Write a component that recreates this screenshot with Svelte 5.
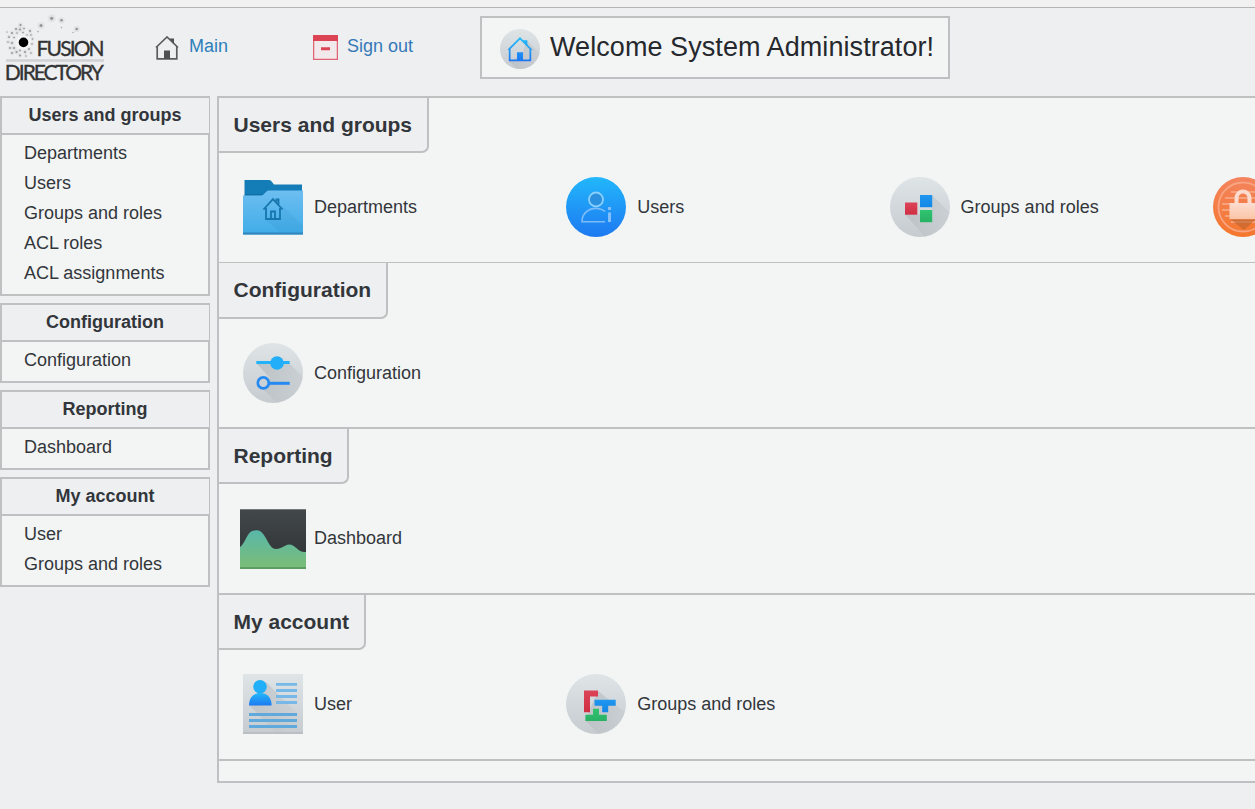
<script>
  const groups = [
    { title: 'Users and groups', height: 165, line: 1, tab: 55,
      menu: ['Departments', 'Users', 'Groups and roles', 'ACL roles', 'ACL assignments'],
      items: [['Departments', 'folder'], ['Users', 'users'], ['Groups and roles', 'groups'], ['', 'lock']] },
    { title: 'Configuration', height: 166, line: 2, tab: 56, menu: ['Configuration'], items: [['Configuration', 'config']] },
    { title: 'Reporting', height: 166, line: 2, tab: 55, menu: ['Dashboard'], items: [['Dashboard', 'chart']] },
    { title: 'My account', height: 166, line: 2, tab: 55, menu: ['User', 'Groups and roles'], items: [['User', 'card'], ['Groups and roles', 'tetris']] }
  ];
  const dots = [[51.7,4.3,1.6],[61.5,6.3,1.3],[41,11.5,1.5],[76.7,15,1.3],[61.5,13.5,.5],[38,17.5,.6],[73,18.5,.5],
    [20.5,11,1.1],[16,15,1],[20,15.5,1],[24,14.5,.8],[12,19,1],[17,19,.8],[23,18.5,.8],[30,17,1],[9,23,.9],[14,23.5,.8],[31,21,.8],
    [8,28,.8],[12,29,1],[10,34,.9],[14,34,1],[12,39,.9],[16.5,38,1],[20,36.5,.8],[20,41.5,.9],[25,38,1],[29,35,.9],[32,30,.8],[32.5,25,.8],[26,42,.7],[31,39,.8],[7,18,.6],[27,21,.7]];
</script>

<svg class="defs" aria-hidden="true">
  <defs>
    <linearGradient id="silver" x2="0" y2="1"><stop stop-color="#dfe4e7" /><stop offset="1" stop-color="#c5cbcf" /></linearGradient>
    <linearGradient id="blue" x2="0" y2="1"><stop stop-color="#22b7fb" /><stop offset="1" stop-color="#1d79f1" /></linearGradient>
    <linearGradient id="homeBlue" gradientUnits="userSpaceOnUse" x1="0" y1="16" x2="0" y2="48"><stop stop-color="#21b9fb" /><stop offset="1" stop-color="#1c77f4" /></linearGradient>
    <linearGradient id="front" x2="0" y2="1"><stop stop-color="#6dbef0" /><stop offset="1" stop-color="#40ace8" /></linearGradient>
    <linearGradient id="orange" x2="0" y2="1"><stop stop-color="#f4845f" /><stop offset="1" stop-color="#f4772c" /></linearGradient>
    <linearGradient id="peach" x2="0" y2="1"><stop stop-color="#fcddd0" /><stop offset="1" stop-color="#fbc4a6" /></linearGradient>
    <linearGradient id="dark" x2="0" y2="1"><stop stop-color="#43484b" /><stop offset="1" stop-color="#2c3033" /></linearGradient>
    <linearGradient id="hill" x2="0" y2="1"><stop stop-color="#58b7a9" /><stop offset="1" stop-color="#7dbd75" /></linearGradient>
    <linearGradient id="red" x2="0" y2="1"><stop stop-color="#dc4458" /><stop offset="1" stop-color="#d02e42" /></linearGradient>
    <linearGradient id="sky" x2="0" y2="1"><stop stop-color="#2196ef" /><stop offset="1" stop-color="#1287e5" /></linearGradient>
    <linearGradient id="green" x2="0" y2="1"><stop stop-color="#30c370" /><stop offset="1" stop-color="#29b163" /></linearGradient>
    <linearGradient id="shade" x2="1" y2="1"><stop stop-color="#737b80" stop-opacity=".26" /><stop offset=".85" stop-color="#737b80" stop-opacity="0" /></linearGradient>
    <clipPath id="disc"><circle cx="30" cy="30" r="30" /></clipPath>
  </defs>
</svg>

{#snippet icon(kind)}
  {#if kind === 'folder'}
    <svg class="icon" viewBox="0 0 60 60">
      <path d="M1.5 3h24.5q2 0 3 2l2 2.5h28V30h-57.5z" fill="#147db7" />
      <path d="M1.5 17h20v1.3h-20z" fill="#0d618f" opacity=".5" />
      <path d="M0 18.5h18q2 0 3.5-2l2-2q1-1 3-1H60V57.5H0z" fill="url(#front)" />
      <path d="M39 28l21 21v7H38L23 43h15z" fill="#2887bd" opacity=".12" />
      <path d="M0 55.6h60v1.9H0z" fill="#3187bd" />
      <path d="M20.5 32.5 30 22.2 39.5 32.5M23 31v11h14V31M33.5 24.5v-2h2v5M28 41.5v-7h4v7" fill="none" stroke="#1676ad" stroke-width="1.8" />
    </svg>
  {:else if kind === 'users'}
    <svg class="icon" viewBox="0 0 60 60">
      <circle cx="30" cy="30" r="30" fill="url(#blue)" />
      <circle cx="30" cy="22.5" r="7" fill="#2b91de" stroke="#8acffb" stroke-width="1.8" />
      <path d="M39 34.5C35 30.8 27 30.4 22 33.5c-4 2.6-6 6-6 11.2h23" fill="none" stroke="#7dbcf8" stroke-width="1.6" />
      <path d="M42 30h3v3h-3zM42 35.5h3V45h-3z" fill="#82bffa" />
    </svg>
  {:else if kind === 'groups'}
    <svg class="icon" viewBox="0 0 60 60">
      <circle cx="30" cy="30" r="30" fill="url(#silver)" />
      <path clip-path="url(#disc)" d="M42 18l22 22v22H37L15 37.5h27z" fill="url(#shade)" />
      <path d="M15 25.5h12.3v12.2H15z" fill="url(#red)" /><path d="M30 18h12.2v12.2H30z" fill="url(#sky)" /><path d="M30 33h12.2v12.2H30z" fill="url(#green)" />
    </svg>
  {:else if kind === 'lock'}
    <svg class="icon" viewBox="0 0 60 60">
      <circle cx="30" cy="30" r="30" fill="url(#orange)" />
      <circle cx="30" cy="30" r="24.5" fill="none" stroke="#f8a381" stroke-width="1.8" />
      <path d="M18 15h24M12 21h36M9 27h42M9 33h42M12 39h36M18 45h24" stroke="#f8a17d" stroke-width="2" />
      <path d="M17 42h26L31 53z" fill="#bc632d" opacity=".6" />
      <path d="M23.5 27v-6a6.5 6.5 0 0 1 13 0v6" fill="none" stroke="#fcdccf" stroke-width="4" />
      <path d="M16.5 26h27v16.2h-27z" fill="url(#peach)" />
    </svg>
  {:else if kind === 'config'}
    <svg class="icon" viewBox="0 0 60 60">
      <circle cx="30" cy="30" r="30" fill="url(#silver)" />
      <path clip-path="url(#disc)" d="M14 21h33l17 17v23H35L18 44l9-9z" fill="url(#shade)" />
      <path d="M13.3 18h33.4v3H13.3z" fill="#23b2f9" /><circle cx="34" cy="20" r="6.8" fill="#22aef8" />
      <path d="M26 38.8h20.7v3H26z" fill="#248af1" /><circle cx="20.3" cy="39.9" r="5.5" fill="#cbd2d7" stroke="#248af1" stroke-width="2.7" />
    </svg>
  {:else if kind === 'chart'}
    <svg class="icon chart" viewBox="0 0 66 60">
      <path d="M0 0h66v60H0z" fill="url(#dark)" /><path d="M0 .5h66" stroke="#73787a" />
      <path d="M0 38C6 34 7 21 15 21.5C26 19 27 40 36 40C42 40 45 35.5 49 35.5C56 35.5 58 44 66 43V60H0z" fill="url(#hill)" />
      <path d="M0 58h66v2H0z" fill="#5c9e61" />
    </svg>
  {:else if kind === 'card'}
    <svg class="icon" viewBox="0 0 60 60">
      <path d="M0 0h60v60H0z" fill="url(#silver)" />
      <path d="M23 8 60 45v15H35L6 31z" fill="url(#shade)" /><path d="M0 58h60v2H0z" fill="#b9bfc2" />
      <circle cx="17" cy="12.8" r="6.8" fill="#21aff9" /><path d="M6 31.5C6 23 11 19 17.3 19S28.6 23 28.6 31.5z" fill="url(#blue)" />
      <path d="M33 10.4h21M33 16.5h21M33 22.5h21M33 28.5h21" stroke="#76b9e9" stroke-width="2.8" />
      <path d="M6 40.5h48M6 46.5h48M6 52.5h48" stroke="#60a9dd" stroke-width="2.8" />
    </svg>
  {:else}
    <svg class="icon" viewBox="0 0 60 60">
      <circle cx="30" cy="30" r="30" fill="url(#silver)" />
      <path clip-path="url(#disc)" d="M32 17l32 25v22H37L19 46.5z" fill="url(#shade)" />
      <path d="M18 16.5h14v6h-8v15.8h-6z" fill="url(#red)" /><path d="M28.5 25.7h21.2v6h-7.5v6.5h-6v-6.5h-7.7z" fill="url(#sky)" />
      <path d="M27 34.7h6v6h7.8v6.2H19.4v-6.2H27z" fill="url(#green)" />
    </svg>
  {/if}
{/snippet}

<div class="page">
  <div class="strip"></div>
  <header>
    <svg class="logo" viewBox="0 0 105 72">
      <g fill="#555">{#each dots as [x, y, r]}<circle cx={x} cy={y} {r} opacity=".55" /><circle cx={x} cy={y} r={r * 2.4} opacity=".08" />{/each}</g>
      <circle cx="23.5" cy="28.4" r="7" fill="#fff" opacity=".4" /><circle cx="23.5" cy="28.4" r="4.8" fill="#000" />
      <text x="36.6" y="42" textLength="68">FUSION</text>
      <path d="M6 46.5h98" stroke="#d0d1d3" stroke-width="2.5" />
      <text x="4.8" y="65.8" textLength="99">DIRECTORY</text>
    </svg>
    <a class="main-link" href="#main">
      <svg viewBox="0 0 24 24"><path d="M1 11.5 12 1 23 11.5M2.2 10.5v12.3h19.6V10.5" fill="none" stroke="#5b5c5e" stroke-width="1.7" /><path d="M9 14.5h6V23H9zM14.5 2.5H19v5.5z" fill="#4f5052" /></svg>
      <span>Main</span>
    </a>
    <a class="out-link" href="#signout">
      <svg viewBox="0 0 25 25"><path d="M.6.6h23.8v23.8H.6z" fill="#f2e9ec" stroke="#df6372" stroke-width="1.3" /><path d="M0 0h25v6H0zM8 12.3h9v3H8z" fill="#dc4355" /></svg>
      <span>Sign out</span>
    </a>
    <div class="welcome">
      <svg viewBox="0 0 60 60">
        <circle cx="30" cy="30" r="30" fill="url(#silver)" /><path clip-path="url(#disc)" d="M40 17 64 41v23H31L13 48l20-8z" fill="url(#shade)" />
        <path d="M12.5 31.5 30 14l17.5 17.5M14.5 30v17h31V30" fill="none" stroke="url(#homeBlue)" stroke-width="2.6" /><path d="M34 17h7v8zM25.5 35h9v12h-9z" fill="url(#homeBlue)" />
      </svg>
      <h1>Welcome System Administrator!</h1>
    </div>
  </header>
  <div class="body">
    <nav>
      {#each groups as group}
        <div class="menu">
          <h3>{group.title}</h3>
          <ul>{#each group.menu as name}<li>{name}</li>{/each}</ul>
        </div>
      {/each}
    </nav>
    <main>
      {#each groups as group}
        <section style:height="{group.height}px" style:border-bottom-width="{group.line}px">
          <h2 style:height="{group.tab}px">{group.title}</h2>
          <div class="items">
            {#each group.items as [name, kind]}
              <div class="item">{@render icon(kind)}{#if name}<span>{name}</span>{/if}</div>
            {/each}
          </div>
        </section>
      {/each}
      <div class="foot"></div>
    </main>
  </div>
</div>

<style>
  :global(body) { margin: 0; background: #eeeff1; }
  .page { width: 1255px; height: 809px; overflow: hidden; background: #eeeff1; color: #32363b; font: 18px/30px "Liberation Sans", Arial, sans-serif; }
  .defs { position: absolute; width: 0; height: 0; }
  .page svg { display: block; flex: none; }
  * { box-sizing: border-box; }
  .strip { height: 8px; background: #f1f1f2; border-bottom: 1px solid #b4b5b8; }
  header { height: 88px; display: flex; align-items: flex-start; }
  .logo { width: 105px; height: 72px; margin-top: 6px; }
  .logo text { font: 21px Lato, sans-serif; fill: #333; stroke: #333; stroke-width: .35px; }
  a { display: flex; color: #2c80ba; text-decoration: none; }
  .main-link { width: 158px; margin: 23px 0 0 50px; }
  .main-link svg { width: 24px; height: 24px; margin: 5px 10px 0 0; }
  .out-link { width: 167px; margin-top: 23px; }
  .out-link span { color: #3579b8; }
  .out-link svg { width: 25px; height: 25px; margin: 4px 9px 0 0; }
  .welcome { width: 470px; height: 63px; margin-top: 8px; padding-left: 18px; border: 2px solid #bfc0c2; background: #f3f5f4; display: flex; align-items: center; }
  .welcome svg { width: 40px; height: 40px; margin: 3px 10px 0 0; }
  h1 { margin: 0 0 2px; font-size: 27px; letter-spacing: .07px; font-weight: 400; white-space: nowrap; color: #25282d; }
  .body { display: flex; }
  nav { width: 217px; display: flex; flex-direction: column; gap: 7px; }
  .menu { width: 210px; }
  h3 { margin: 0; height: 39px; padding-right: 1px; border: 2px solid #bfc0c2; border-right-width: 1px; text-align: center; font-size: 18px; line-height: 34px; }
  ul { list-style: none; margin: 0; padding: 3px 0 6px 22px; border: solid #bfc0c2; border-width: 0 2px 2px; background: #f3f5f4; }
  main { width: 1038px; height: 687px; border: solid #bfc0c2; border-width: 2px 0 2px 2px; background: #f3f5f4; overflow: hidden; }
  section { border: 0 solid #bfc0c2; }
  h2 { width: fit-content; margin: 0; padding: 0 14.5px 0 14.5px; border: solid #bfc0c2; border-width: 0 2px 2px 0; border-bottom-right-radius: 7px; background: #eeeff1; font-size: 21px; line-height: 54px; }
  .items { display: flex; padding: 24px 0 0 24px; }
  .item { width: 323.3px; flex: none; display: flex; align-items: center; height: 60px; }
  .icon { width: 60px; height: 60px; margin-right: 11px; }
  .page .chart { width: 66px; margin: 1px 8px 0 -3px; }
</style>
